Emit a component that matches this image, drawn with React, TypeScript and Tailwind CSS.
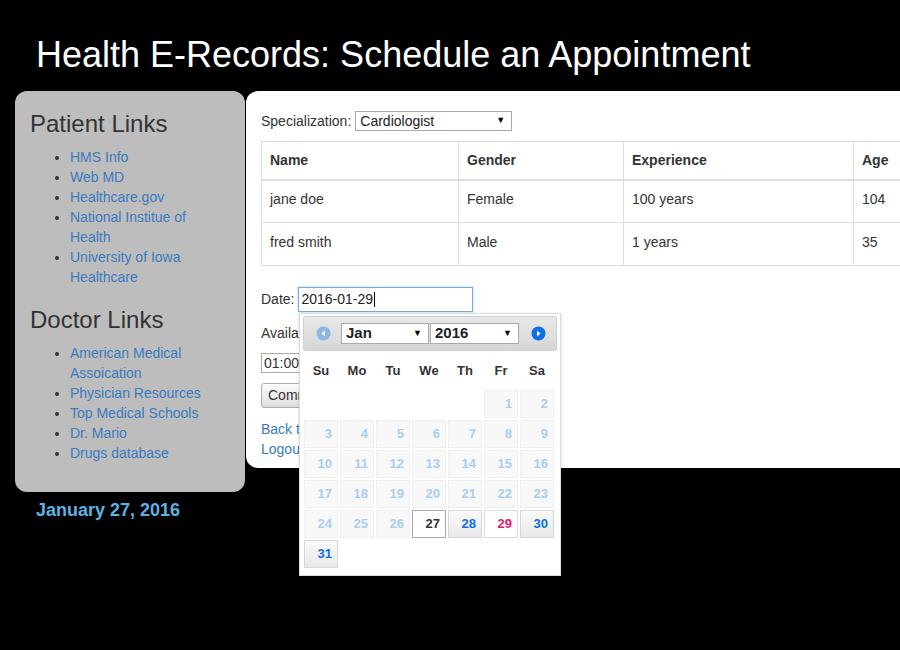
import React from "react";

const patientLinks = [
  "HMS Info",
  "Web MD",
  "Healthcare.gov",
  "National Institue of Health",
  "University of Iowa Healthcare",
];

const doctorLinks = [
  "American Medical Assoication",
  "Physician Resources",
  "Top Medical Schools",
  "Dr. Mario",
  "Drugs database",
];

const doctors = [
  { name: "jane doe", gender: "Female", exp: "100 years", age: "104" },
  { name: "fred smith", gender: "Male", exp: "1 years", age: "35" },
];

const dayNames = ["Su", "Mo", "Tu", "We", "Th", "Fr", "Sa"];

function LinkList({ items }: { items: string[] }) {
  return (
    <ul className="list-disc pl-[40px] mb-[20px] text-[14px] leading-[20px] marker:text-[#333]">
      {items.map((l) => (
        <li key={l}>
          <a className="text-[#3a7bbf]">{l}</a>
        </li>
      ))}
    </ul>
  );
}

function Sidebar() {
  return (
    <div className="w-[230px] bg-[#bdbdbd] rounded-[12px] px-[15px] pt-[20px] pb-[9px]">
      <h3 className="text-[24px] leading-[26px] text-[#333] mb-[10px]">Patient Links</h3>
      <LinkList items={patientLinks} />
      <h3 className="text-[24px] leading-[26px] text-[#333] mb-[10px]">Doctor Links</h3>
      <LinkList items={doctorLinks} />
    </div>
  );
}

function FakeSelect({
  value,
  className,
}: {
  value: string;
  className: string;
}) {
  return (
    <div
      className={
        "flex items-center justify-between bg-white border border-[#a9a9a9] " +
        className
      }
    >
      <span>{value}</span>
      <span className="text-[9px] text-black">▼</span>
    </div>
  );
}

function NavCircle({ dir, active }: { dir: "prev" | "next"; active: boolean }) {
  return (
    <svg width="15" height="15" viewBox="0 0 15 15">
      <circle cx="7.5" cy="7.5" r="7" fill={active ? "#0b6fe6" : "#8db6e6"} />
      {dir === "next" ? (
        <path d="M6 4.5 L9.5 7.5 L6 10.5 Z" fill="white" />
      ) : (
        <path d="M9 4.5 L5.5 7.5 L9 10.5 Z" fill="white" />
      )}
    </svg>
  );
}

function DayCell({ d }: { d: number }) {
  let cls = "bg-[#f8f8f8] border-[#efefef] text-[#a9cdf3]";
  if (d === 27) cls = "bg-white border-[#a8a8a8] text-[#333]";
  else if (d === 29) cls = "bg-white border-[#dddddd] text-[#f0146e]";
  else if (d === 28 || d === 30 || d === 31)
    cls = "bg-gradient-to-b from-[#fafafa] to-[#e9e9e9] border-[#d6d6d6] text-[#0b6fe6]";
  return (
    <div
      className={
        "h-[28px] border flex items-center justify-end pr-[5px] text-[13px] font-bold " +
        cls
      }
    >
      {d}
    </div>
  );
}

function DatePicker() {
  const cells: (number | null)[] = [null, null, null, null, null];
  for (let i = 1; i <= 31; i++) cells.push(i);
  return (
    <div className="absolute left-[53px] top-[222px] w-[262px] h-[263px] bg-white border border-[#dcdcdc] shadow-[0_1px_3px_rgba(0,0,0,0.15)] pt-[2px] px-[3px]">
      <div className="h-[35px] flex items-center bg-gradient-to-b from-[#e8e8e8] to-[#d6d6d6] border border-[#d0d0d0] rounded-[2px]">
        <div className="w-[37px] flex justify-center pl-[2px]">
          <NavCircle dir="prev" active={false} />
        </div>
        <FakeSelect
          value="Jan"
          className="w-[88px] h-[21px] pl-[4px] pr-[6px] text-[15px] font-bold text-[#222] border-[#aaa]"
        />
        <FakeSelect
          value="2016"
          className="ml-[1px] w-[89px] h-[21px] pl-[4px] pr-[6px] text-[15px] font-bold text-[#222] border-[#aaa]"
        />
        <div className="flex-1 flex justify-center pl-[2px]">
          <NavCircle dir="next" active={true} />
        </div>
      </div>
      <div className="grid grid-cols-[34px_34px_34px_34px_34px_34px_34px] gap-x-[2px] ml-[1px] h-[39px] items-center">
        {dayNames.map((n) => (
          <div key={n} className="text-center text-[13px] font-bold text-[#333]">
            {n}
          </div>
        ))}
      </div>
      <div className="grid grid-cols-[34px_34px_34px_34px_34px_34px_34px] gap-x-[2px] gap-y-[2px] ml-[1px]">
        {cells.map((d, i) => (d === null ? <div key={i} /> : <DayCell key={i} d={d} />))}
      </div>
    </div>
  );
}

function MainPanel() {
  return (
    <div className="relative ml-[1px] w-[740px] shrink-0 self-start bg-white rounded-l-[12px] pl-[15px] pt-[20px] pb-[9px] text-[14px] text-[#333]">
      <div className="flex items-center h-[20px]">
        <span className="mr-[4px]">Specialization:</span>
        <FakeSelect
          value="Cardiologist"
          className="w-[157px] h-[20px] pl-[4px] pr-[6px] text-[14px] text-[#222]"
        />
      </div>
      <table className="mt-[10px] w-[710px] table-fixed border-collapse border border-[#dddddd]">
        <colgroup>
          <col className="w-[197px]" />
          <col className="w-[165px]" />
          <col className="w-[230px]" />
          <col />
        </colgroup>
        <thead>
          <tr className="h-[38px] border-b-2 border-[#dddddd]">
            {["Name", "Gender", "Experience", "Age"].map((h) => (
              <th key={h} className="text-left font-bold px-[8px] border-r border-[#dddddd]">
                {h}
              </th>
            ))}
          </tr>
        </thead>
        <tbody>
          {doctors.map((d) => (
            <tr key={d.name} className="h-[43px] border-b border-[#dddddd]">
              <td className="px-[8px] pb-[4px] border-r border-[#dddddd]">{d.name}</td>
              <td className="px-[8px] pb-[4px] border-r border-[#dddddd]">{d.gender}</td>
              <td className="px-[8px] pb-[4px] border-r border-[#dddddd]">{d.exp}</td>
              <td className="px-[8px] pb-[4px]">{d.age}</td>
            </tr>
          ))}
        </tbody>
      </table>
      <div className="mt-[21px] flex items-center h-[25px]">
        <span className="mr-[4px]">Date:</span>
        <div className="w-[175px] h-[25px] border border-[#7ba8e8] shadow-[0_0_2px_rgba(102,175,233,0.6)] flex items-center pl-[2px] text-[#222]">
          2016-01-29
          <span className="ml-[1px] w-px h-[15px] bg-black" />
        </div>
      </div>
      <div className="mt-[11px] leading-[20px]">Available Times:</div>
      <div className="mt-[10px] w-[120px] h-[20px] border border-[#a9a9a9] pl-[2px] leading-[18px]">
        01:00 PM
      </div>
      <button className="mt-[10px] h-[25px] px-[6px] rounded-[3px] border border-[#adadad] bg-gradient-to-b from-[#fdfdfd] to-[#dedede] text-[14px] text-[#333]">
        Commit Appointment
      </button>
      <div className="mt-[11px] leading-[20px]">
        <a className="block text-[#3a7bbf]">Back to Home</a>
        <a className="block text-[#3a7bbf]">Logout</a>
      </div>
      <DatePicker />
    </div>
  );
}

export default function App() {
  return (
    <div
      className="w-[900px] h-[650px] overflow-hidden bg-black"
      style={{ fontFamily: '"Liberation Sans", Arial, sans-serif' }}
    >
      <h1 className="pt-[35px] pl-[36px] text-[36px] leading-[40px] text-white">
        Health E-Records: Schedule an Appointment
      </h1>
      <div className="flex mt-[16px]">
        <div className="pl-[15px] shrink-0">
          <Sidebar />
          <div className="mt-[8px] ml-[21px] text-[18px] leading-[20px] font-bold text-[#5bb4e5]">
            January 27, 2016
          </div>
        </div>
        <MainPanel />
      </div>
    </div>
  );
}
